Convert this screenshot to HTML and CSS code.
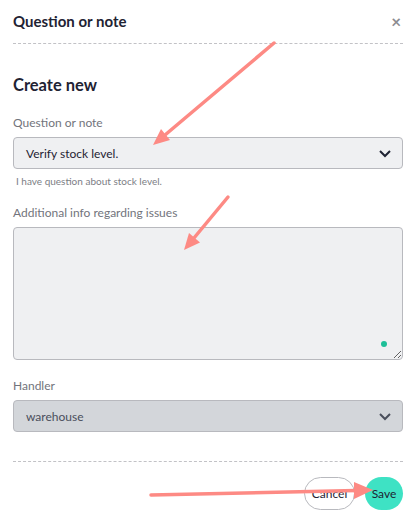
FILE: index.html
```html
<!DOCTYPE html>
<html>
<head>
<meta charset="utf-8">
<link rel="stylesheet" href="styles.css">
</head>
<body>
<div class="modal">
  <div class="header">
    <h1 class="title">Question or note</h1>
    <span class="close">×</span>
  </div>
  <div class="body">
    <h2 class="subtitle">Create new</h2>
    <div class="field">
      <label class="label">Question or note</label>
      <div class="select">
        <span>Verify stock level.</span>
        <svg class="chev" width="14" height="9" viewBox="0 0 14 9"><path d="M2 2l5 5 5-5" fill="none" stroke="#1f2333" stroke-width="2"/></svg>
      </div>
      <div class="help">I have question about stock level.</div>
    </div>
    <div class="field">
      <label class="label">Additional info regarding issues</label>
      <div class="tawrap">
        <textarea class="textarea"></textarea>
        <span class="dot"></span>
      </div>
    </div>
    <div class="field">
      <label class="label">Handler</label>
      <div class="select disabled">
        <span>warehouse</span>
        <svg class="chev" width="14" height="9" viewBox="0 0 14 9"><path d="M2 2l5 5 5-5" fill="none" stroke="#4a4f5c" stroke-width="2"/></svg>
      </div>
    </div>
  </div>
  <div class="footer">
    <button class="btn cancel">Cancel</button>
    <button class="btn save">Save</button>
  </div>
</div>
<svg class="annot" width="416" height="523" viewBox="0 0 416 523">
  <g stroke="#fd8a84" stroke-width="3.5" stroke-linecap="round" fill="none">
    <line x1="274" y1="43" x2="165" y2="135"/>
    <line x1="228" y1="197" x2="194" y2="238"/>
    <line x1="151" y1="495" x2="356" y2="490.5"/>
  </g>
  <g fill="#fd8a84">
    <polygon points="153,145 170,140 161,129"/>
    <polygon points="184,250 200,242.5 189,233"/>
    <polygon points="373,490 354,499 354,482"/>
  </g>
</svg>
</body>
</html>
```
FILE: styles.css
```css
* { box-sizing: border-box; }
html, body { margin: 0; padding: 0; background: #fff; }
body {
  font-family: Lato, "Open Sans", sans-serif;
  color: #1f2333;
  width: 416px;
  height: 523px;
  position: relative;
  overflow: hidden;
}
.modal { padding: 0 13px; }
.header {
  display: flex;
  justify-content: space-between;
  align-items: center;
  height: 44px;
  border-bottom: 1px dashed #c2c2c6;
}
.title {
  margin: 0;
  font-size: 15px;
  font-weight: 700;
  color: #1f2333;
  padding-bottom: 2px;
}
.close {
  font-size: 17px;
  font-weight: 700;
  color: #8c8c90;
  margin-right: 2px;
  line-height: 1;
}
.body { padding-top: 31px; }
.subtitle {
  margin: 0 0 20px;
  font-size: 16.5px;
  font-weight: 700;
  line-height: 20px;
}
.field { display: flex; flex-direction: column; margin-bottom: 18px; }
.label {
  font-size: 12px;
  color: #72747c;
  line-height: 15px;
  margin-bottom: 7px;
}
.select {
  height: 32px;
  background: #eff0f2;
  border: 1px solid #b8b9be;
  border-radius: 4px;
  display: flex;
  align-items: center;
  justify-content: space-between;
  padding: 0 10px 0 12px;
  font-size: 12px;
  color: #1f2333;
}
.select.disabled { background: #d3d6da; color: #4a4f5c; }
.chev { display: block; }
.help {
  font-size: 10px;
  color: #7c7e85;
  margin: 6px 0 0 3px;
  line-height: 12px;
}
.tawrap { position: relative; height: 133px; }
.textarea {
  display: block;
  width: 100%;
  height: 133px;
  background: #eff0f2;
  border: 1px solid #b8b9be;
  border-radius: 4px;
  resize: vertical;
  font-family: inherit;
}
.dot {
  position: absolute;
  right: 16px;
  bottom: 13px;
  width: 6px;
  height: 6px;
  border-radius: 50%;
  background: #1dbf98;
}
.footer {
  margin-top: 29px;
  border-top: 1px dashed #c2c2c6;
  padding-top: 15px;
  display: flex;
  justify-content: flex-end;
  gap: 10px;
}
.btn {
  height: 33px;
  border-radius: 17px;
  font-family: inherit;
  font-size: 12px;
  color: #1f2333;
  padding: 0;
}
.cancel {
  width: 51px;
  background: #fff;
  border: 1px solid #b8b9be;
}
.save {
  width: 38px;
  background: #3ee2c4;
  border: none;
}
.annot { position: absolute; left: 0; top: 0; pointer-events: none; }
```
